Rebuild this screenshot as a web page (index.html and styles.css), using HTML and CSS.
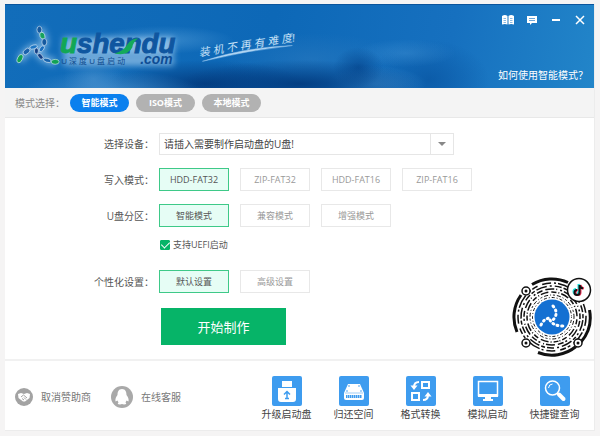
FILE: index.html
```html
<!DOCTYPE html>
<html lang="zh-CN">
<head>
    <meta charset="utf-8">
    <meta name="viewport" content="width=device-width, initial-scale=1">
    <title>U深度U盘启动</title>
    <link rel="stylesheet" href="styles.css">
</head>
<body>
<div class="window">

    <header class="banner">
        <svg class="logo" width="300" height="84" viewBox="5 4 300 84">
            <defs>
                <filter id="glow" x="-20%" y="-60%" width="140%" height="220%">
                    <feGaussianBlur stdDeviation="3"/>
                </filter>
            </defs>
            <g fill="none" stroke="#a9d0f0" stroke-width="8" filter="url(#glow)">
                <path d="M38 28Q47 42 40 48Q30 42 18 60M36 48Q36 58 54 62" opacity=".6"/>
                <path d="M62 46H174" stroke-width="18" opacity=".75"/>
                <path d="M62 61H174" opacity=".7"/>
            </g>
            <g stroke="#e4f1fb" stroke-width=".6">
                <ellipse cx="38" cy="29" rx="2.500" ry="3.500" fill="#14599f"/>
                <ellipse cx="41" cy="35" rx="2.500" ry="3.500" fill="#17a25c" transform="rotate(-20 41 35)"/>
                <ellipse cx="43" cy="41.500" rx="2.500" ry="3.500" fill="#14599f"/>
                <ellipse cx="40.500" cy="48" rx="2" ry="3.500" fill="#1c6fbe" transform="rotate(35 40 48)"/>
                <ellipse cx="32" cy="46.500" rx="4" ry="2" fill="#1c75c4" transform="rotate(-15 32 46)"/>
                <ellipse cx="25" cy="51" rx="4" ry="2.500" fill="#1b62ab" transform="rotate(-40 25 51)"/>
                <ellipse cx="18.500" cy="58.500" rx="2.500" ry="4.500" fill="#12a154" transform="rotate(25 19 58)"/>
                <ellipse cx="35" cy="50.500" rx="2" ry="3" fill="#123f86"/>
                <ellipse cx="39" cy="56" rx="2" ry="3.500" fill="#123f86" transform="rotate(-40 39 56)"/>
                <ellipse cx="46" cy="60" rx="4" ry="2" fill="#1663ad" transform="rotate(15 46 60)"/>
                <ellipse cx="54" cy="61.500" rx="4" ry="2.500" fill="#12a154"/>
            </g>
            <text class="logo-name" x="59" y="53"><tspan class="green">u</tspan>shendu</text>
            <path d="M114 53Q123 51 127 44Q131 38 138 38Q133 41 132 47Q127 56 114 53Z" fill="#14a95a"/>
            <text class="logo-com" x="140" y="64">.com</text>
            <text class="logo-sub" x="60" y="64">U 深 度 U 盘 启 动</text>
            <text class="slogan" x="200" y="56" transform="rotate(-9 200 56)">装 机 不 再 有 难 度!</text>
            <path d="M203 61Q244 47 294 45Q248 50 203 61Z" fill="#b5d8f3" stroke="#8dc0ea" stroke-width=".5"/>
        </svg>

        <div class="banner-side">
            <div class="win-buttons">
                <button type="button" aria-label="教程">
                    <svg width="12" height="10" viewBox="0 0 12 10"><path d="M0 1Q3-1 5.500 1V9.500Q3 8.500 0 9.500ZM6.500 1Q9-1 12 1V9.500Q9 8.500 6.500 9.500Z" fill="#fff"/><path d="M1.500 3.500H4M1.500 5.500H4M1.500 7.500H4M8 3.500H10.500M8 5.500H10.500M8 7.500H10.500" stroke="#8bbbe3"/></svg>
                </button>
                <button type="button" aria-label="反馈">
                    <svg width="10" height="10" viewBox="0 0 10 10"><path d="M0 1H10V8H5L3 10V8H0Z" fill="#fff"/><path d="M2 3.500H8M2 5.500H8" stroke="#6ba6da"/></svg>
                </button>
                <button type="button" aria-label="最小化">
                    <svg width="10" height="10" viewBox="0 0 10 10"><path d="M1 5H9" stroke="#fff" stroke-width="2"/></svg>
                </button>
                <button type="button" aria-label="关闭">
                    <svg width="10" height="10" viewBox="0 0 10 10"><path d="M1 1L9 9M9 1L1 9" stroke="#fff" stroke-width="1.500"/></svg>
                </button>
            </div>
            <a class="help" href="#">如何使用智能模式？</a>
        </div>
    </header>

    <nav class="modes">
        <span>模式选择：</span>
        <button type="button" class="pill active">智能模式</button>
        <button type="button" class="pill">ISO模式</button>
        <button type="button" class="pill">本地模式</button>
    </nav>

    <main class="content">
        <form class="settings">
            <label class="name" for="device">选择设备：</label>
            <div class="select">
                <select id="device">
                    <option>请插入需要制作启动盘的U盘!</option>
                </select>
                <span class="arrow"></span>
            </div>

            <span class="name">写入模式：</span>
            <div class="options">
                <button type="button" class="option active">HDD-FAT32</button>
                <button type="button" class="option">ZIP-FAT32</button>
                <button type="button" class="option">HDD-FAT16</button>
                <button type="button" class="option">ZIP-FAT16</button>
            </div>

            <span class="name">U盘分区：</span>
            <div class="options">
                <button type="button" class="option active">智能模式</button>
                <button type="button" class="option">兼容模式</button>
                <button type="button" class="option">增强模式</button>
            </div>

            <label class="check"><input type="checkbox" checked>支持UEFI启动</label>

            <span class="name">个性化设置：</span>
            <div class="options">
                <button type="button" class="option active">默认设置</button>
                <button type="button" class="option">高级设置</button>
            </div>

            <button type="button" class="start">开始制作</button>
        </form>

        <!-- floating douyin code -->
        <svg class="qr" width="84" height="84" viewBox="-42 -42 84 84">
            <circle r="40" fill="#fff"/>
            <g fill="none" stroke="#111">
                <path d="M-31-22A38 38 0 0 0-35 15M-14 35.500A38 38 0 0 0 24 29.500M37.500-7A38 38 0 0 1 29 25M-20-32.500A38 38 0 0 1 16-34.500" stroke-width="3"/>
                <circle r="34" stroke-width="1.500" stroke-dasharray="9 3 2 2 14 4 3 2 6 5"/>
                <circle r="31" stroke-width="1.500" stroke-dasharray="4 2 11 3 2 3 7 2" transform="rotate(40)"/>
                <circle r="28" stroke-width="1.500" stroke-dasharray="2 2 6 3 9 2 1 3"/>
                <circle r="25" stroke-width="1.500" stroke-dasharray="5 2 1 2 8 3" transform="rotate(75)"/>
                <circle r="22" stroke-width="1" stroke-dasharray="2 2 4 2 1 2"/>
                <circle r="19.500" stroke-width="1" stroke-dasharray="1 2 3 2"/>
            </g>
            <circle r="17.500" fill="#1470d2"/>
            <!-- three bent arms of beads -->
            <g fill="none" stroke="#fff" stroke-width="3" stroke-linecap="round" stroke-dasharray="1 3.600">
                <path d="M1-11Q6-5 3 0Q2 3-1 3"/>
                <path d="M-11 8Q-8 1-1 1"/>
                <path d="M-2 3Q1 9 11 9"/>
            </g>
            <g fill="#fff" stroke="#111" stroke-width="1.500">
                <circle cx="-26" cy="-26" r="4"/>
                <circle cx="-26" cy="26" r="4"/>
                <circle cx="26" cy="26" r="4"/>
                <circle cx="27" cy="-27" r="11.500"/>
            </g>
            <g fill="#111">
                <circle cx="-26" cy="-26" r="1.500"/>
                <circle cx="-26" cy="26" r="1.500"/>
                <circle cx="26" cy="26" r="1.500"/>
            </g>
            <g fill="none" stroke-width="2">
                <path d="M27.500-32V-24.500A2.500 2.500 0 1 1 25-27M27.500-32Q28-29 31-28.500" stroke="#25e5e0" transform="translate(-1 -1)"/>
                <path d="M27.500-32V-24.500A2.500 2.500 0 1 1 25-27M27.500-32Q28-29 31-28.500" stroke="#f5355b" transform="translate(1 0)"/>
                <path d="M27.500-32V-24.500A2.500 2.500 0 1 1 25-27M27.500-32Q28-29 31-28.500" stroke="#111"/>
            </g>
        </svg>
    </main>

    <footer class="footer">
        <a class="link" href="#">
            <svg width="18" height="18" viewBox="0 0 18 18"><circle cx="9" cy="9" r="9" fill="#a3a3a3"/><path d="M3 6L6 5L9 6L12 5L15 6L14.500 10L10 13.500H8L3.500 10Z" fill="#fff"/><path d="M6 9L8.500 7L12 10M7 10.500L9 12M9 9.500L11 11.500" stroke="#a3a3a3" fill="none"/></svg>
            取消赞助商
        </a>
        <a class="link" href="#">
            <svg width="22" height="22" viewBox="0 0 22 22"><circle cx="11" cy="11" r="11" fill="#a9a9a9"/><path d="M11 3C7.500 3 6.500 6 6.500 9C5 11 4 13 4.500 15.500L6.500 14.500L7.500 16.500C6 17.500 7 18.500 9 18.500L11 18L13 18.500C15 18.500 16 17.500 14.500 16.500L15.500 14.500L17.500 15.500C18 13 17 11 15.500 9C15.500 6 14.500 3 11 3Z" fill="#fff"/></svg>
            在线客服
        </a>

        <div class="tools">
            <button type="button" class="tool">
                <svg width="30" height="30" viewBox="0 0 30 30"><rect width="30" height="30" rx="2" fill="#3e9cef"/><path d="M10 5H20V11H10ZM6 12H24V23Q24 26 21 26H9Q6 26 6 23Z" fill="#fff"/><path d="M15 23V16M12 18.500L15 15.500L18 18.500M13 22.500H17" stroke="#3e9cef" stroke-width="1.500" fill="none"/></svg>
                升级启动盘
            </button>
            <button type="button" class="tool">
                <svg width="30" height="30" viewBox="0 0 30 30"><rect width="30" height="30" rx="2" fill="#3e9cef"/><path d="M9 8H21L25 17V22Q25 24 23 24H7Q5 24 5 22V17Z" fill="#fff"/><path d="M6 17H24" stroke="#9fcdf6"/><path d="M7 20.500H23" stroke="#3e9cef" stroke-width="3" stroke-dasharray="1.500 .5"/><g fill="#3e9cef"><circle cx="10" cy="10" r=".8"/><circle cx="20" cy="10" r=".8"/><circle cx="8" cy="15" r=".8"/><circle cx="22" cy="15" r=".8"/></g></svg>
                归还空间
            </button>
            <button type="button" class="tool">
                <svg width="30" height="30" viewBox="0 0 30 30"><rect width="30" height="30" rx="2" fill="#3e9cef"/><g fill="none" stroke="#fff" stroke-width="2"><rect x="16" y="6" width="7" height="6"/><rect x="6" y="17" width="7" height="7"/><path d="M13 6Q8 6 8 11M17 24Q22 24 22 19"/></g><path d="M4.500 9.500H11.500L8 14ZM18.500 20.500H25.500L22 16Z" fill="#fff"/></svg>
                格式转换
            </button>
            <button type="button" class="tool">
                <svg width="30" height="30" viewBox="0 0 30 30"><rect width="30" height="30" rx="2" fill="#3e9cef"/><rect x="5.500" y="5.500" width="19" height="14" fill="none" stroke="#fff" stroke-width="1.500"/><path d="M5 18H25V21H5ZM12 21H18V23H20V25H10V23H12Z" fill="#fff"/></svg>
                模拟启动
            </button>
            <button type="button" class="tool">
                <svg width="30" height="30" viewBox="0 0 30 30"><rect width="30" height="30" rx="2" fill="#3e9cef"/><circle cx="12.500" cy="12" r="7" fill="none" stroke="#fff" stroke-width="1.500"/><path d="M8.500 12Q9 8 12.500 8" fill="none" stroke="#fff"/><path d="M17 17L19 19" stroke="#fff" stroke-width="2"/><path d="M19 18.500L23.500 23" stroke="#fff" stroke-width="4" stroke-linecap="round"/></svg>
                快捷键查询
            </button>
        </div>
    </footer>

</div>
</body>
</html>
```
FILE: styles.css
```css
* {box-sizing: border-box;}
body {
    margin: 0;
    padding: 4px 5px;
    background: #f5f4f4;
    color: #555;
    font: 10px/16px "Open Sans", "Noto Sans CJK SC", sans-serif;
}
button {
    margin: 0;
    padding: 0;
    border: 0;
    background: none;
    color: inherit;
    font: inherit;
    cursor: pointer;
}
a {
    color: inherit;
    text-decoration: none;
}
svg {display: block;}
.window {
    background: #fff;
    border-right: 1px solid #ececec;
    border-bottom: 1px solid #ececec;
}

/* banner */
.banner {
    display: flex;
    justify-content: space-between;
    background:
        radial-gradient(ellipse 90px 22px at 18% 105%, rgba(90, 155, 210, .6), transparent),
        radial-gradient(ellipse 70px 14px at 27% 42%, rgba(80, 155, 215, .6), transparent),
        radial-gradient(ellipse 30px 24px at 88px 74px, rgba(80, 150, 210, .5), transparent),
        radial-gradient(ellipse 120px 24px at 50% 95%, rgba(3, 58, 125, .9), transparent),
        radial-gradient(ellipse 100px 24px at 34% 95%, rgba(3, 58, 125, .9), transparent),
        radial-gradient(ellipse 25px 20px at 60% 75%, rgba(4, 68, 140, .7), transparent),
        radial-gradient(ellipse 50px 18px at 63% 95%, rgba(70, 150, 215, .6), transparent),
        radial-gradient(ellipse 50px 14px at 68% 58%, rgba(70, 150, 215, .4), transparent),
        radial-gradient(ellipse 90px 26px at 52% 65%, rgba(40, 120, 190, .6), transparent),
        radial-gradient(ellipse 60px 40px at 72% 90%, rgba(8, 84, 160, .7), transparent),
        linear-gradient(100deg, #126dba, #0d68b7 45%, #1670bf 75%, #2285c9);
    border-top: 1px solid #0b559d;
}
.logo {
    flex: none;
    height: 83px;
}
.logo text {font-family: "Liberation Sans", "Noto Sans CJK SC", sans-serif;}
.logo-name {
    fill: #0f56a0;
    stroke: #0f56a0;
    font-size: 28px;
    font-weight: bold;
    font-style: italic;
}
.logo-name .green {
    fill: #12a755;
    stroke: #12a755;
}
.logo-com {
    fill: #0d4c94;
    font-size: 14px;
    font-weight: bold;
    font-style: italic;
}
.logo-sub {
    fill: #0f4c8f;
    font-size: 8px;
}
.slogan {
    fill: #c5e0f6;
    font-size: 11px;
    font-style: italic;
}
.banner-side {
    display: flex;
    flex-direction: column;
    justify-content: space-between;
    align-items: flex-end;
    padding: 7px 6px 5px 0;
    color: #fff;
}
.win-buttons {
    display: flex;
    gap: 8px;
}
.win-buttons button {
    display: flex;
    align-items: center;
    justify-content: center;
    width: 16px;
    height: 16px;
}

/* mode tabs */
.modes {
    display: flex;
    align-items: center;
    gap: 7px;
    height: 30px;
    padding-left: 10px;
    border-bottom: 1px solid #e8e8e8;
    background: #f4f4f4;
    color: #888;
}
.modes span {margin-right: -2px;}
.pill {
    width: 59px;
    height: 18px;
    border-radius: 9px;
    background: #b2b2b2;
    color: #fff;
    font-size: 9px;
    font-weight: bold;
}
.pill.active {background: #0a80ee;}

/* settings */
.content {
    position: relative;
    padding: 15px 0 14px 85px;
    border-bottom: 2px solid #f1f1f1;
}
.settings {
    display: grid;
    grid-template-columns: 64px 1fr;
    column-gap: 5px;
    row-gap: 13px;
    align-items: center;
}
.name {text-align: right;}
.select {
    display: flex;
    width: 295px;
    height: 22px;
    border: 1px solid #e6e6e6;
}
.select select {
    flex: 1;
    padding: 0 4px;
    border: 0;
    appearance: none;
    background: #fff;
    color: #444;
    font: inherit;
}
.arrow {
    display: flex;
    align-items: center;
    justify-content: center;
    width: 23px;
    border-left: 1px solid #e6e6e6;
}
.arrow::after {
    content: "";
    border: 4px solid transparent;
    border-top-color: #888;
    border-bottom: 0;
}
.options {
    display: flex;
    gap: 11px;
}
.option {
    width: 70px;
    height: 23px;
    border: 1px solid #e8e8e8;
    color: #999;
    font-size: 9px;
}
.option.active {
    border-color: #3ec988;
    background: #e6fdf5;
    color: #555;
}
.check {
    grid-column: 2;
    display: flex;
    align-items: center;
    gap: 3px;
    height: 10px;
    margin-bottom: 7px;
    font-size: 9px;
}
.check input {
    display: flex;
    align-items: center;
    justify-content: center;
    width: 10px;
    height: 10px;
    margin: 0 0 0 1px;
    border: 1px solid #06b468;
    border-radius: 1px;
    appearance: none;
    background: #fff;
}
.check input:checked {background: #06b468;}
.check input:checked::after {
    content: "";
    width: 4px;
    height: 7px;
    margin-bottom: 2px;
    border: solid #fff;
    border-width: 0 1px 1px 0;
    transform: rotate(45deg);
}
.start {
    grid-column: 2;
    width: 125px;
    height: 37px;
    margin: 2px 0 0 2px;
    background: #06b468;
    color: #fff;
    font-size: 13px;
}
.qr {
    position: absolute;
    right: 0;
    bottom: 0;
}

/* footer */
.footer {
    display: flex;
    align-items: center;
    gap: 20px;
    padding: 15px 6px 8px 10px;
    color: #777;
}
.link {
    display: flex;
    align-items: center;
    gap: 8px;
    padding-bottom: 4px;
}
.tools {
    display: flex;
    margin-left: auto;
}
.tool {
    display: flex;
    flex-direction: column;
    align-items: center;
    width: 67px;
    color: #444;
}
```
